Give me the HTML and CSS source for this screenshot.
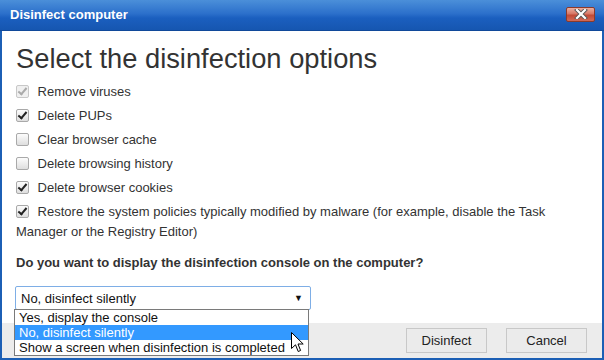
FILE: index.html
```html
<!DOCTYPE html>
<html>
    <head>
        <meta charset="UTF-8">
        <title>Disinfect computer</title>
        <link rel="stylesheet" href="styles.css">
    </head>

    <body>
        <div class="window">
            <header class="titlebar">
                <span class="title">Disinfect computer</span>
                <button class="close" type="button">
                    <svg width="14" height="10" viewBox="0 0 14 10">
                        <path d="M3 1 L11 9 M11 1 L3 9" stroke="#555" stroke-width="4" stroke-linecap="square"/>
                        <path d="M3 1 L11 9 M11 1 L3 9" stroke="#fff" stroke-width="2.2" stroke-linecap="square"/>
                    </svg>
                </button>
            </header>

            <div class="content">
                <h1 class="heading">Select the disinfection options</h1>

                <label class="opt"><input type="checkbox" checked disabled> Remove viruses</label>
                <label class="opt"><input type="checkbox" checked> Delete PUPs</label>
                <label class="opt"><input type="checkbox"> Clear browser cache</label>
                <label class="opt"><input type="checkbox"> Delete browsing history</label>
                <label class="opt"><input type="checkbox" checked> Delete browser cookies</label>
                <label class="opt"><input type="checkbox" checked> Restore the system policies typically modified by malware (for example, disable the Task Manager or the Registry Editor)</label>

                <p class="question">Do you want to display the disinfection console on the computer?</p>

                <div class="dropdown">
                    <div class="select">
                        <span>No, disinfect silently</span>
                        <span class="arrow">&#9660;</span>
                    </div>
                    <ul class="list">
                        <li>Yes, display the console</li>
                        <li class="selected">No, disinfect silently</li>
                        <li>Show a screen when disinfection is completed</li>
                    </ul>
                    <svg class="cursor" width="13" height="21" viewBox="0 0 13 21">
                        <path d="M0.5 0.5 L0.5 16.5 L4.5 12.8 L7.2 19.5 L9.6 18.5 L7 12 L12.2 12 Z" fill="#fff" stroke="#000" stroke-width="1"/>
                    </svg>
                </div>
            </div>

            <footer class="footer">
                <button class="btn" type="button">Disinfect</button>
                <button class="btn" type="button">Cancel</button>
            </footer>
        </div>
    </body>
</html>
```

FILE: styles.css
```css
* {
    box-sizing: border-box;
}
body {
    margin: 0;
    font-family: "Liberation Sans", Arial, sans-serif;
    color: #333;
}
.window {
    width: 604px;
    height: 360px;
    border: 2px solid #1c5fb5;
    border-top: none;
    display: flex;
    flex-direction: column;
    background-color: #fff;
}
.titlebar {
    height: 31px;
    margin: 0 -2px;
    padding: 0 9px 0 10px;
    display: flex;
    align-items: center;
    justify-content: space-between;
    background: linear-gradient(#4b8fd9, #2c70cb 45%, #1b5fbf 60%, #1656b0);
    border-bottom: 1px solid #10499a;
}
.title {
    color: #fff;
    font-weight: bold;
    font-size: 13px;
    margin-top: -2px;
}
.close {
    width: 29px;
    height: 15px;
    padding: 0;
    margin-top: -2px;
    border: 1px solid #8a3a2c;
    border-radius: 2px;
    background: linear-gradient(#eab0a0, #d77766 45%, #c24a36 55%, #d06a58);
    display: flex;
    align-items: center;
    justify-content: center;
}
.content {
    flex: 1;
    padding: 0 12px;
}
.heading {
    font-size: 27.3px;
    font-weight: normal;
    margin: 12px 0 7px 2px;
    color: #333;
}
.opt {
    display: block;
    font-size: 13px;
    line-height: 20px;
    margin-bottom: 4px;
    padding-left: 2px;
}
.opt input {
    appearance: none;
    -webkit-appearance: none;
    width: 13px;
    height: 13px;
    margin: 0 5px 0 0;
    vertical-align: -2px;
    border: 1px solid #a9a9a9;
    border-radius: 2px;
    background: linear-gradient(#fcfcfc, #dedede);
    position: relative;
}
.opt input:checked::after {
    content: "";
    position: absolute;
    left: 3px;
    top: 0px;
    width: 3px;
    height: 7px;
    border: solid #222;
    border-width: 0 2px 2px 0;
    transform: rotate(40deg);
}
.opt input:disabled {
    border-color: #c8c8c8;
    background: #f0f0f0;
}
.opt input:disabled::after {
    border-color: #aaa;
}
.question {
    font-size: 13px;
    font-weight: bold;
    margin: 13px 0 16px 2px;
}
.dropdown {
    position: relative;
    width: 296px;
    margin-left: 1px;
}
.select {
    height: 24px;
    border: 1px solid #7eaee6;
    border-radius: 2px;
    padding: 0 7px 0 5px;
    font-size: 13px;
    color: #111;
    display: flex;
    align-items: center;
    justify-content: space-between;
}
.arrow {
    font-size: 9px;
}
.list {
    position: absolute;
    top: 23px;
    left: -1px;
    width: 295px;
    margin: 0;
    padding: 0;
    list-style: none;
    background-color: #fff;
    border: 1px solid #7a7a7a;
    z-index: 2;
}
.list li {
    font-size: 13px;
    line-height: 15px;
    padding: 0 4px;
    color: #111;
}
.list .selected {
    background-color: #3399ff;
    color: #fff;
}
.cursor {
    position: absolute;
    left: 276px;
    top: 46px;
    z-index: 3;
}
.footer {
    height: 35px;
    background-color: #ececec;
    display: flex;
    justify-content: flex-end;
    align-items: center;
    gap: 19px;
    padding-right: 15px;
}
.btn {
    width: 81px;
    height: 25px;
    font-family: "Liberation Sans", Arial, sans-serif;
    font-size: 13px;
    color: #222;
    background-color: #ebebeb;
    border: 1px solid #c8c8c8;
    border-radius: 0;
}
```
